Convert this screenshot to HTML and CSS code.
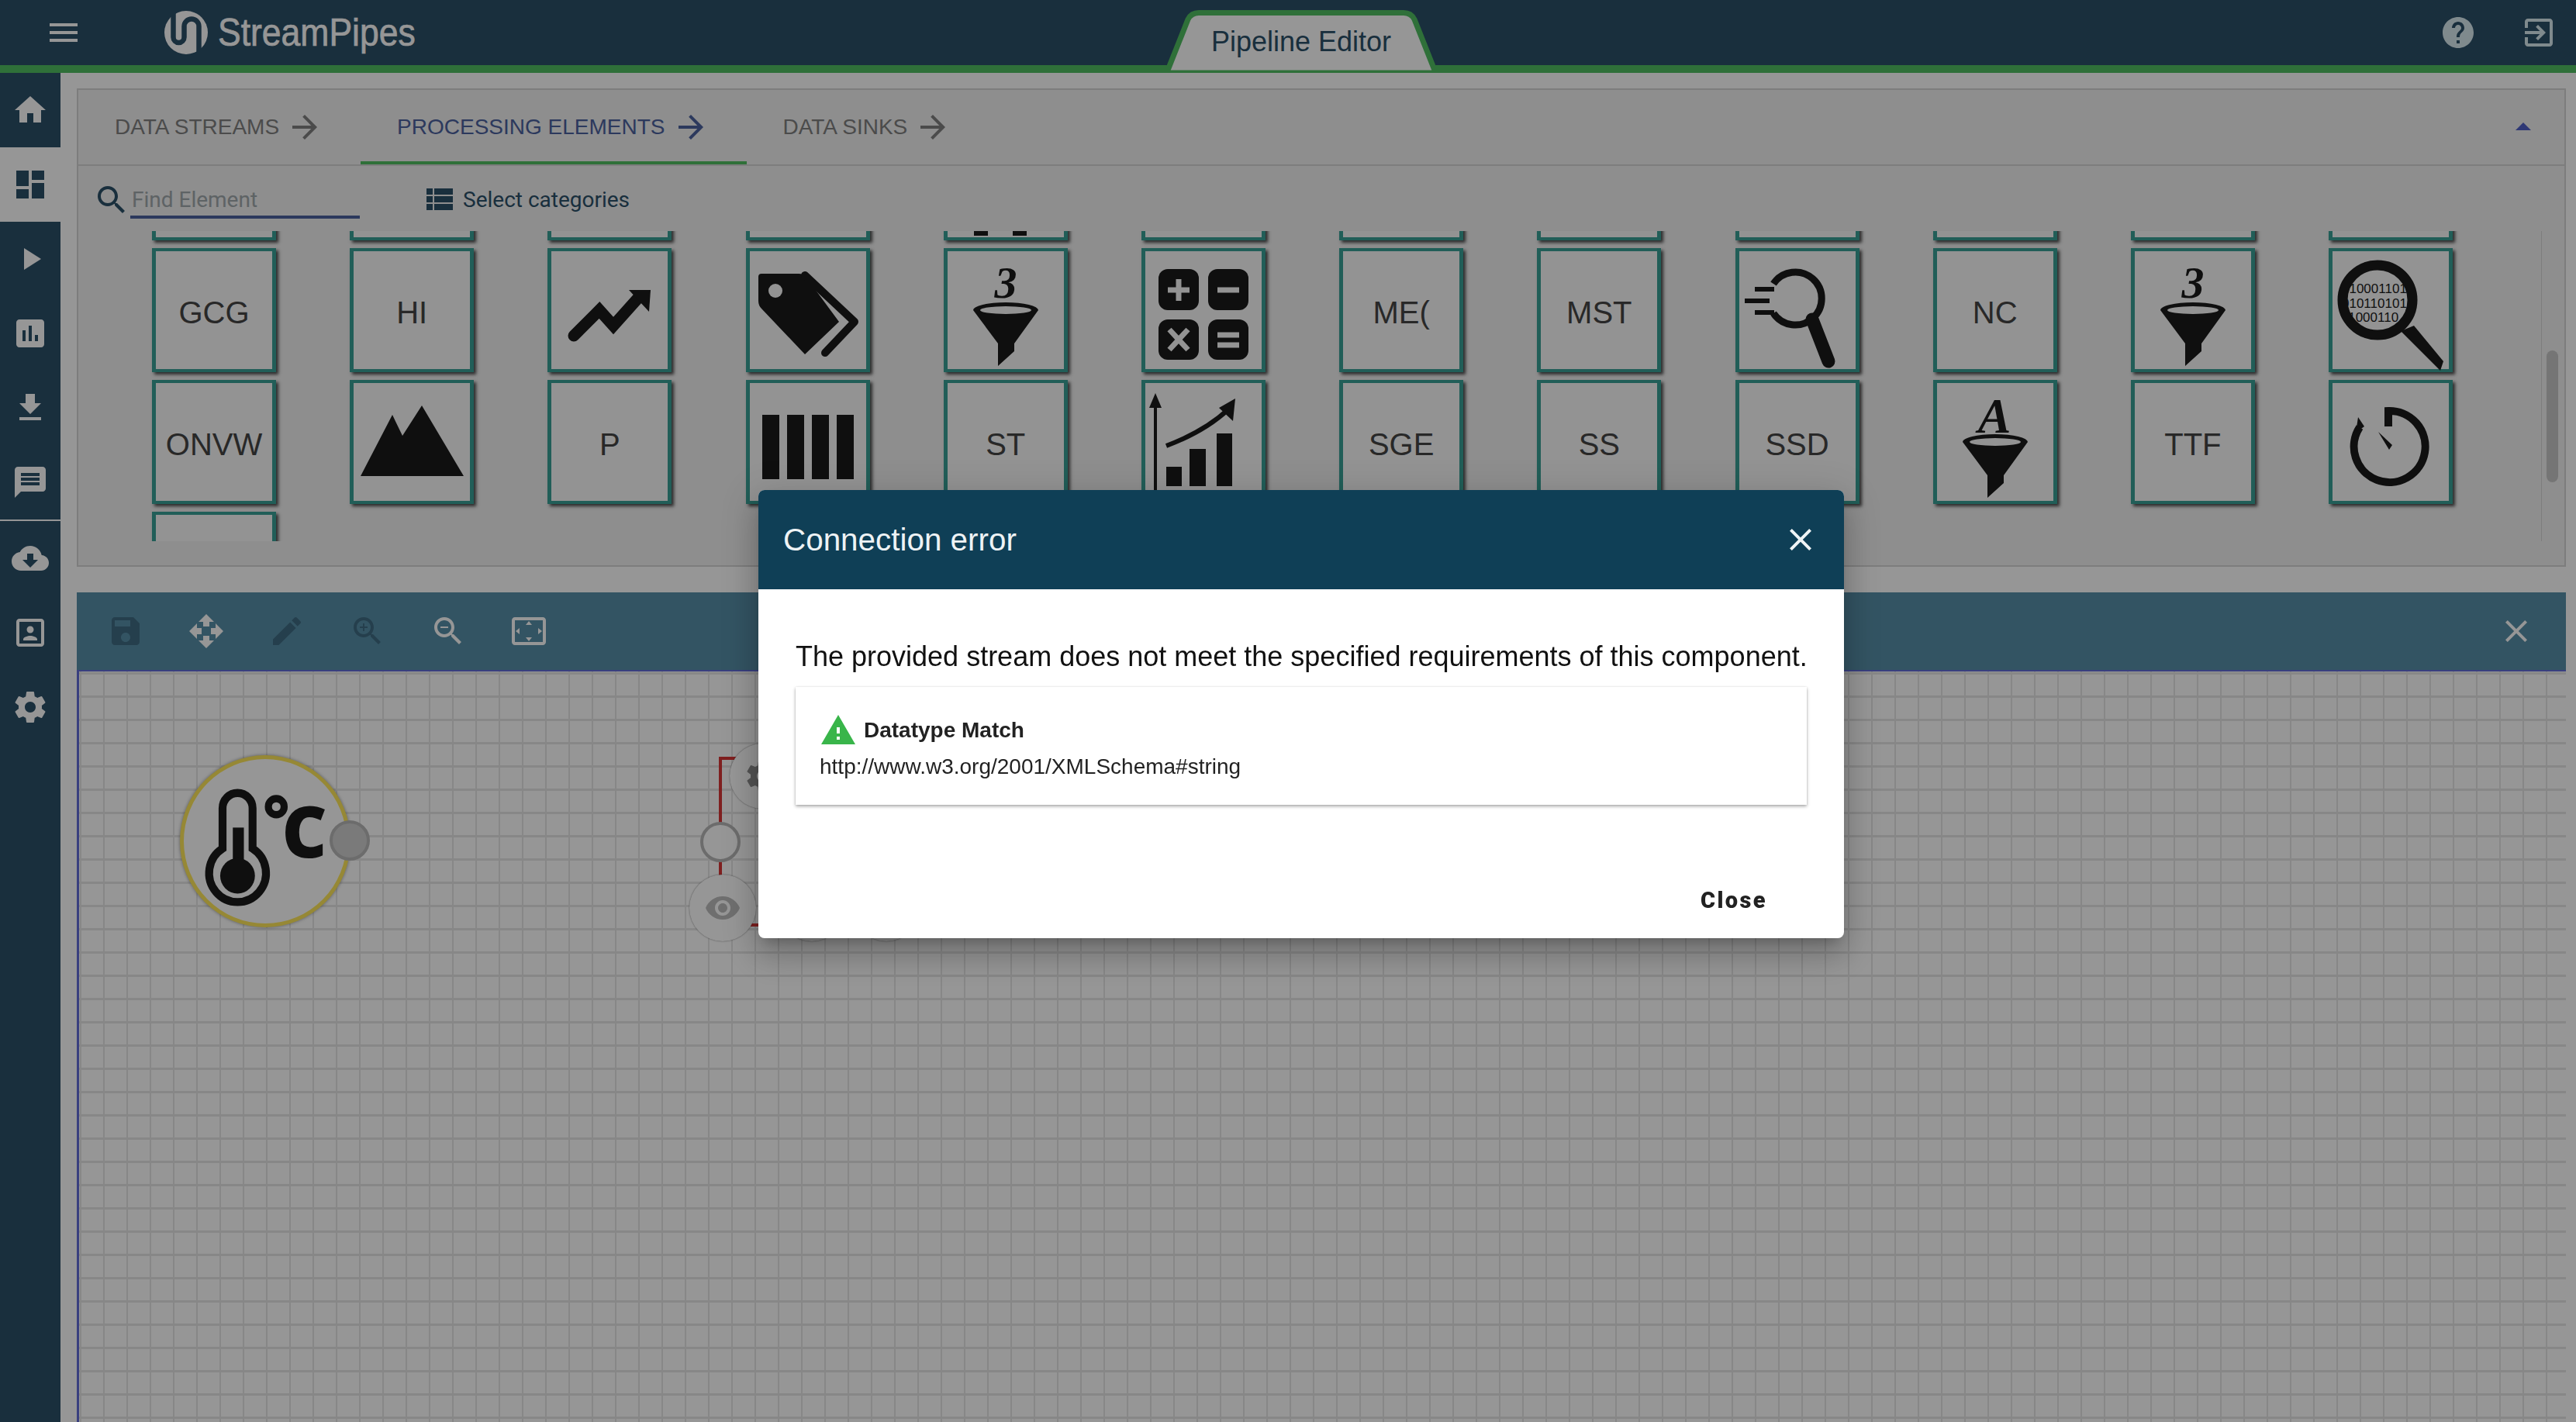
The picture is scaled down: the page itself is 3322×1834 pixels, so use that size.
FILE: index.html
```html
<!DOCTYPE html>
<html lang="en">
<head>
    <meta charset="UTF-8">
    <title>StreamPipes Pipeline Editor</title>
    <link rel="stylesheet" href="styles.css">
</head>
<body>
    <svg class="sprites" width="0" height="0">
        <symbol id="i-menu" viewBox="0 0 24 24"><path d="M3 18h18v-2H3v2zm0-5h18v-2H3v2zm0-7v2h18V6H3z"/></symbol>
        <symbol id="i-home" viewBox="0 0 24 24"><path d="M10 20v-6h4v6h5v-8h3L12 3 2 12h3v8z"/></symbol>
        <symbol id="i-dashboard" viewBox="0 0 24 24"><path d="M3 13h8V3H3v10zm0 8h8v-6H3v6zm10 0h8V11h-8v10zm0-18v6h8V3h-8z"/></symbol>
        <symbol id="i-play" viewBox="0 0 24 24"><path d="M8 5v14l11-7z"/></symbol>
        <symbol id="i-chart" viewBox="0 0 24 24"><path d="M19 3H5c-1.1 0-2 .9-2 2v14c0 1.1.9 2 2 2h14c1.1 0 2-.9 2-2V5c0-1.1-.9-2-2-2zM9 17H7v-7h2v7zm4 0h-2V7h2v10zm4 0h-2v-4h2v4z"/></symbol>
        <symbol id="i-download" viewBox="0 0 24 24"><path d="M19 9h-4V3H9v6H5l7 7 7-7zM5 18v2h14v-2H5z"/></symbol>
        <symbol id="i-message" viewBox="0 0 24 24"><path d="M20 2H4c-1.1 0-1.99.9-1.99 2L2 22l4-4h14c1.1 0 2-.9 2-2V4c0-1.1-.9-2-2-2zm-2 12H6v-2h12v2zm0-3H6V9h12v2zm0-3H6V6h12v2z"/></symbol>
        <symbol id="i-cloud" viewBox="0 0 24 24"><path d="M19.35 10.04C18.67 6.59 15.64 4 12 4 9.11 4 6.6 5.64 5.35 8.04 2.34 8.36 0 10.91 0 14c0 3.31 2.69 6 6 6h13c2.76 0 5-2.24 5-5 0-2.64-2.05-4.78-4.65-4.96zM17 13l-5 5-5-5h3V9h4v4h3z"/></symbol>
        <symbol id="i-portrait" viewBox="0 0 24 24"><path d="M12 12.25c1.24 0 2.25-1.01 2.25-2.25S13.24 7.75 12 7.75 9.75 8.76 9.75 10s1.01 2.25 2.25 2.25zm4.5 4c0-1.5-3-2.25-4.5-2.25s-4.5.75-4.5 2.25V17h9v-.75zM19 3H5c-1.1 0-2 .9-2 2v14c0 1.1.9 2 2 2h14c1.1 0 2-.9 2-2V5c0-1.1-.9-2-2-2zm0 16H5V5h14v14z"/></symbol>
        <symbol id="i-gear" viewBox="0 0 24 24"><path d="M19.43 12.98c.04-.32.07-.64.07-.98s-.03-.66-.07-.98l2.11-1.65c.19-.15.24-.42.12-.64l-2-3.46c-.12-.22-.39-.3-.61-.22l-2.49 1c-.52-.4-1.08-.73-1.69-.98l-.38-2.65C14.46 2.18 14.25 2 14 2h-4c-.25 0-.46.18-.49.42l-.38 2.65c-.61.25-1.17.59-1.69.98l-2.49-1c-.23-.09-.49 0-.61.22l-2 3.46c-.13.22-.07.49.12.64l2.11 1.65c-.04.32-.07.65-.07.98s.03.66.07.98l-2.11 1.65c-.19.15-.24.42-.12.64l2 3.46c.12.22.39.3.61.22l2.49-1c.52.4 1.08.73 1.69.98l.38 2.65c.03.24.24.42.49.42h4c.25 0 .46-.18.49-.42l.38-2.65c.61-.25 1.17-.59 1.69-.98l2.49 1c.23.09.49 0 .61-.22l2-3.46c.12-.22.07-.49-.12-.64l-2.11-1.65zM12 15.5c-1.93 0-3.5-1.57-3.5-3.5s1.57-3.5 3.5-3.5 3.5 1.57 3.5 3.5-1.57 3.5-3.5 3.5z"/></symbol>
        <symbol id="i-help" viewBox="0 0 24 24"><path d="M12 2C6.48 2 2 6.48 2 12s4.48 10 10 10 10-4.48 10-10S17.52 2 12 2zm1 17h-2v-2h2v2zm2.07-7.75l-.9.92C13.45 12.9 13 13.5 13 15h-2v-.5c0-1.1.45-2.1 1.17-2.83l1.24-1.26c.37-.36.59-.86.59-1.41 0-1.1-.9-2-2-2s-2 .9-2 2H8c0-2.21 1.79-4 4-4s4 1.79 4 4c0 .88-.36 1.68-.93 2.25z"/></symbol>
        <symbol id="i-exit" viewBox="0 0 24 24"><path d="M10.09 15.59L11.5 17l5-5-5-5-1.41 1.41L12.67 11H3v2h9.67l-2.58 2.59zM19 3H5c-1.11 0-2 .9-2 2v4h2V5h14v14H5v-4H3v4c0 1.1.89 2 2 2h14c1.1 0 2-.9 2-2V5c0-1.1-.9-2-2-2z"/></symbol>
        <symbol id="i-arrow" viewBox="0 0 24 24"><path d="M12 4l-1.41 1.41L16.17 11H4v2h12.17l-5.58 5.59L12 20l8-8z"/></symbol>
        <symbol id="i-search" viewBox="0 0 24 24"><path d="M15.5 14h-.79l-.28-.27C15.41 12.59 16 11.11 16 9.5 16 5.91 13.09 3 9.5 3S3 5.91 3 9.5 5.91 16 9.5 16c1.61 0 3.09-.59 4.23-1.57l.27.28v.79l5 4.99L20.49 19l-4.99-5zm-6 0C7.01 14 5 11.99 5 9.5S7.01 5 9.5 5 14 7.01 14 9.5 11.99 14 9.5 14z"/></symbol>
        <symbol id="i-list" viewBox="0 0 24 24"><path d="M4 14h4v-4H4v4zm0 5h4v-4H4v4zm0-10h4V5H4v4zm5 5h12v-4H9v4zm0 5h12v-4H9v4zM9 5v4h12V5H9z"/></symbol>
        <symbol id="i-save" viewBox="0 0 24 24"><path d="M17 3H5c-1.11 0-2 .9-2 2v14c0 1.1.89 2 2 2h14c1.1 0 2-.9 2-2V7l-4-4zm-5 16c-1.66 0-3-1.34-3-3s1.34-3 3-3 3 1.34 3 3-1.34 3-3 3zm3-10H5V5h10v4z"/></symbol>
        <symbol id="i-move" viewBox="0 0 24 24"><path d="M10 9h4V6h3l-5-5-5 5h3v3zm-1 1H6V7l-5 5 5 5v-3h3v-4zm14 2l-5-5v3h-3v4h3v3l5-5zm-9 3h-4v3H7l5 5 5-5h-3v-3z"/></symbol>
        <symbol id="i-edit" viewBox="0 0 24 24"><path d="M3 17.25V21h3.75L17.81 9.94l-3.75-3.75L3 17.25zM20.71 7.04c.39-.39.39-1.02 0-1.41l-2.34-2.34c-.39-.39-1.02-.39-1.41 0l-1.83 1.83 3.75 3.75 1.83-1.83z"/></symbol>
        <symbol id="i-zoom-in" viewBox="0 0 24 24"><path d="M15.5 14h-.79l-.28-.27C15.41 12.59 16 11.11 16 9.5 16 5.91 13.09 3 9.5 3S3 5.91 3 9.5 5.91 16 9.5 16c1.61 0 3.09-.59 4.23-1.57l.27.28v.79l5 4.99L20.49 19l-4.99-5zm-6 0C7.01 14 5 11.99 5 9.5S7.01 5 9.5 5 14 7.01 14 9.5 11.99 14 9.5 14zm2.5-4h-2v2H9v-2H7V9h2V7h1v2h2v1z"/></symbol>
        <symbol id="i-zoom-out" viewBox="0 0 24 24"><path d="M15.5 14h-.79l-.28-.27C15.41 12.59 16 11.11 16 9.5 16 5.91 13.09 3 9.5 3S3 5.91 3 9.5 5.91 16 9.5 16c1.61 0 3.09-.59 4.23-1.57l.27.28v.79l5 4.99L20.49 19l-4.99-5zm-6 0C7.01 14 5 11.99 5 9.5S7.01 5 9.5 5 14 7.01 14 9.5 11.99 14 9.5 14zM7 9h5v1H7z"/></symbol>
        <symbol id="i-fit" viewBox="0 0 24 24"><path d="M12.01 5.5L10 8h4l-1.99-2.5zM18 10v4l2.5-1.99L18 10zM6 10l-2.5 2.01L6 14v-4zm8 6h-4l2.01 2.5L14 16zm7-13H3c-1.1 0-2 .9-2 2v14c0 1.1.9 2 2 2h18c1.1 0 2-.9 2-2V5c0-1.1-.9-2-2-2zm0 16.01H3V4.99h18v14.02z"/></symbol>
        <symbol id="i-close" viewBox="0 0 24 24"><path d="M19 6.41L17.59 5 12 10.59 6.41 5 5 6.41 10.59 12 5 17.59 6.41 19 12 13.41 17.59 19 19 17.59 13.41 12z"/></symbol>
        <symbol id="i-warning" viewBox="0 0 24 24"><path d="M1 21h22L12 2 1 21zm12-3h-2v-2h2v2zm0-4h-2v-4h2v4z"/></symbol>
        <symbol id="i-eye" viewBox="0 0 24 24"><path d="M12 4.5C7 4.5 2.73 7.61 1 12c1.73 4.39 6 7.5 11 7.5s9.27-3.11 11-7.5c-1.73-4.39-6-7.5-11-7.5zM12 17c-2.76 0-5-2.24-5-5s2.24-5 5-5 5 2.24 5 5-2.24 5-5 5zm0-8c-1.66 0-3 1.34-3 3s1.34 3 3 3 3-1.34 3-3-1.34-3-3-3z"/></symbol>
        <symbol id="i-funnel" viewBox="0 0 160 160"><path d="M38 80A42 10 0 0 1 122 80L91 123V133L70 152V123Z"/><ellipse class="funnel-rim" cx="80" cy="80" rx="33" ry="5"/></symbol>
    </svg>

    <div class="app">
        <header class="topbar">
            <svg class="icon menu-btn"><use href="#i-menu"/></svg>
            <svg class="logo-mark" viewBox="12 8 56 56">
                <circle cx="40" cy="36" r="28" fill="#fff"/>
                <path d="M23.500 4V42A7 7 0 0 0 37.500 42V28A9.500 9.500 0 0 1 56.500 28V70" fill="none" stroke="#2c5069" stroke-width="6.500"/>
            </svg>
            <span class="logo-text">StreamPipes</span>
            <div class="page-tab">
                <svg class="page-tab-shape" viewBox="0 0 348 81"><path d="M3 75H0V81H348V75H345L320 12C317 6 313 3.500 306 3.500H42C35 3.500 31 6 28 12Z" fill="#fff" stroke="#51be62" stroke-width="7"/></svg>
                <span class="page-tab-label">Pipeline Editor</span>
            </div>
            <div class="topbar-right">
                <svg class="icon help-btn"><use href="#i-help"/></svg>
                <svg class="icon help-btn"><use href="#i-exit"/></svg>
            </div>
        </header>

        <div class="main">
            <nav class="sidebar">
                <a class="nav-item"><svg class="icon"><use href="#i-home"/></svg></a>
                <a class="nav-item active"><svg class="icon"><use href="#i-dashboard"/></svg></a>
                <a class="nav-item"><svg class="icon"><use href="#i-play"/></svg></a>
                <a class="nav-item"><svg class="icon"><use href="#i-chart"/></svg></a>
                <a class="nav-item"><svg class="icon"><use href="#i-download"/></svg></a>
                <a class="nav-item"><svg class="icon"><use href="#i-message"/></svg></a>
                <div class="nav-divider"></div>
                <a class="nav-item"><svg class="icon"><use href="#i-cloud"/></svg></a>
                <a class="nav-item"><svg class="icon"><use href="#i-portrait"/></svg></a>
                <a class="nav-item"><svg class="icon"><use href="#i-gear"/></svg></a>
            </nav>

            <main class="content">
                <section class="palette">
                    <div class="palette-tabs">
                        <div class="palette-tab">DATA STREAMS <svg class="icon"><use href="#i-arrow"/></svg></div>
                        <div class="palette-tab active">PROCESSING ELEMENTS <svg class="icon"><use href="#i-arrow"/></svg></div>
                        <div class="palette-tab">DATA SINKS <svg class="icon"><use href="#i-arrow"/></svg></div>
                        <div class="collapse-caret"></div>
                    </div>
                    <div class="palette-search">
                        <svg class="icon"><use href="#i-search"/></svg>
                        <div class="find-field">Find Element</div>
                        <div class="category-btn"><svg class="icon"><use href="#i-list"/></svg>Select categories</div>
                    </div>
                    <div class="palette-body">
                        <div class="cards-viewport">
                            <div class="cards">
                                <div class="card"></div><div class="card"></div><div class="card"></div><div class="card"></div>
                                <div class="card"><svg class="card-art" viewBox="0 0 160 160"><rect x="39" y="148" width="18" height="6"/><rect x="89" y="148" width="18" height="6"/></svg></div>
                                <div class="card"></div><div class="card"></div><div class="card"></div><div class="card"></div><div class="card"></div><div class="card"></div><div class="card"></div>

                                <div class="card">GCG</div>
                                <div class="card">HI</div>
                                <div class="card"><svg class="card-art" viewBox="0 0 160 160"><path d="M34 113L67 80 85 100 119 62" fill="none" stroke-width="15" stroke-linecap="round" stroke="#1a1a1a"/><path d="M105 54H133L131 82Z"/></svg></div>
                                <div class="card"><svg class="card-art" viewBox="0 0 160 160"><path d="M20 33H68Q74 33 78 38L120 95 76 137 20 78Q16 74 16 68V37Q16 33 20 33Z"/><circle class="art-hole" cx="38" cy="55" r="9"/><path d="M76 35L140 95 102 135" fill="none" stroke="#1a1a1a" stroke-width="10" stroke-linecap="round" stroke-linejoin="round"/></svg></div>
                                <div class="card"><svg class="card-art" viewBox="0 0 160 160"><use href="#i-funnel"/><text class="art-digit" x="80" y="64">3</text></svg></div>
                                <div class="card"><svg class="card-art" viewBox="0 0 160 160"><rect x="22" y="27" width="52" height="53" rx="12"/><rect x="86" y="27" width="52" height="53" rx="12"/><rect x="22" y="92" width="52" height="52" rx="12"/><rect x="86" y="92" width="52" height="52" rx="12"/><path class="art-sign" d="M34 54H62M48 40V68M98 54H126M36 105L60 131M60 105L36 131M98 112H126M98 125H126"/></svg></div>
                                <div class="card">ME(</div>
                                <div class="card">MST</div>
                                <div class="card"><svg class="card-art" viewBox="0 0 160 160"><path d="M49 46A34 34 0 1 1 49 84" fill="none" stroke="#1a1a1a" stroke-width="9"/><path d="M25 53H50M12 68H44M25 83H50" stroke="#1a1a1a" stroke-width="6"/><path d="M99 92L120 146" stroke="#1a1a1a" stroke-width="17" stroke-linecap="round"/></svg></div>
                                <div class="card">NC</div>
                                <div class="card"><svg class="card-art" viewBox="0 0 160 160"><use href="#i-funnel"/><text class="art-digit" x="80" y="64">3</text></svg></div>
                                <div class="card"><svg class="card-art" viewBox="0 0 160 160"><defs><clipPath id="lens"><circle cx="63" cy="67" r="44"/></clipPath></defs><g clip-path="url(#lens)"><text class="art-bits" x="17" y="58">010001101</text><text class="art-bits" x="17" y="77">010110101</text><text class="art-bits" x="17" y="95">11000110</text></g><circle cx="63" cy="67" r="45" fill="none" stroke="#1a1a1a" stroke-width="13"/><path d="M93 107L110 100 148 146 144 158Z"/></svg></div>

                                <div class="card">ONVW</div>
                                <div class="card"><svg class="card-art" viewBox="0 0 160 160"><path d="M14 124L55 45 68 72 93 33 147 124Z"/></svg></div>
                                <div class="card">P</div>
                                <div class="card"><svg class="card-art" viewBox="0 0 160 160"><rect x="21" y="45" width="22" height="83"/><rect x="53" y="45" width="22" height="83"/><rect x="85" y="45" width="22" height="83"/><rect x="117" y="45" width="22" height="83"/></svg></div>
                                <div class="card">ST</div>
                                <div class="card"><svg class="card-art" viewBox="0 0 160 160"><path d="M18 30V156" stroke="#1a1a1a" stroke-width="4" fill="none"/><path d="M18 17L26 36H10Z"/><rect x="32" y="112" width="20" height="25"/><rect x="62" y="89" width="21" height="48"/><rect x="97" y="69" width="20" height="68"/><path d="M32 85Q82 66 112 38" fill="none" stroke="#1a1a1a" stroke-width="6"/><path d="M121 24L118 53 100 36Z"/></svg></div>
                                <div class="card">SGE</div>
                                <div class="card">SS</div>
                                <div class="card">SSD</div>
                                <div class="card"><svg class="card-art" viewBox="0 0 160 160"><use href="#i-funnel"/><text class="art-letter" x="79" y="68">A</text></svg></div>
                                <div class="card">TTF</div>
                                <div class="card"><svg class="card-art" viewBox="0 0 160 160"><path d="M77 60V40A46 46 0 1 1 40 61" fill="none" stroke="#1a1a1a" stroke-width="10"/><path d="M38 48L46 60 35 68Z"/><path d="M64 67L82 84 78 90Z"/></svg></div>

                                <div class="card"></div>
                            </div>
                        </div>
                        <div class="scroll-track"><div class="scroll-thumb"></div></div>
                    </div>
                </section>

                <section class="editor">
                    <div class="editor-toolbar">
                        <svg class="icon tool-dark"><use href="#i-save"/></svg>
                        <svg class="icon tool-light"><use href="#i-move"/></svg>
                        <svg class="icon tool-dark"><use href="#i-edit"/></svg>
                        <svg class="icon tool-dark"><use href="#i-zoom-in"/></svg>
                        <svg class="icon tool-light"><use href="#i-zoom-out"/></svg>
                        <svg class="icon tool-light"><use href="#i-fit"/></svg>
                        <svg class="icon tool-light tool-close"><use href="#i-close"/></svg>
                    </div>
                    <div class="canvas">
                        <div class="node node-source">
                            <svg class="node-art" viewBox="0 0 216 214" preserveAspectRatio="none">
                                <path d="M54 116V66A19 19 0 0 1 92 66V116A36 36 0 1 1 54 116Z" fill="none" stroke="#1a1a1a" stroke-width="10"/>
                                <rect x="67" y="90" width="14" height="44"/>
                                <circle cx="73" cy="150" r="22"/>
                                <circle cx="122" cy="64" r="10" fill="none" stroke="#1a1a1a" stroke-width="9"/>
                                <text class="node-unit" x="129" y="127">C</text>
                            </svg>
                        </div>
                        <div class="port port-out"></div>
                        <div class="node-frame"></div>
                        <div class="port port-in"></div>
                        <div class="node-btn btn-gear"><svg class="icon"><use href="#i-gear"/></svg></div>
                        <div class="node-btn btn-eye"><svg class="icon"><use href="#i-eye"/></svg></div>
                        <div class="node-btn btn-a"></div>
                        <div class="node-btn btn-b"></div>
                    </div>
                </section>
            </main>
        </div>
    </div>

    <div class="backdrop"></div>
    <div class="modal">
        <div class="modal-header">
            <span>Connection error</span>
            <svg class="icon"><use href="#i-close"/></svg>
        </div>
        <div class="modal-body">
            <p class="modal-text">The provided stream does not meet the specified requirements of this component.</p>
            <div class="match-card">
                <div class="match-title"><svg class="icon"><use href="#i-warning"/></svg>Datatype Match</div>
                <div class="match-url">http://www.w3.org/2001/XMLSchema#string</div>
            </div>
        </div>
        <div class="modal-footer">Close</div>
    </div>
</body>
</html>
```

FILE: styles.css
```css
* {
    margin: 0;
    padding: 0;
    box-sizing: border-box;
}

html, body {
    height: 100%;
    overflow: hidden;
}

body {
    font-family: 'Liberation Sans', Arial, sans-serif;
    background: #fff;
}

.sprites {
    position: absolute;
}

.icon {
    width: 48px;
    height: 48px;
    fill: currentColor;
    flex: none;
    display: block;
}

.app {
    height: 100%;
    display: flex;
    flex-direction: column;
}

/* top bar */
.topbar {
    height: 94px;
    flex: none;
    display: flex;
    align-items: center;
    background: #2c5069;
    border-bottom: 10px solid #51be62;
    color: #fff;
    position: relative;
}

.menu-btn {
    margin-left: 58px;
}

.logo-mark {
    width: 56px;
    height: 56px;
    margin-left: 106px;
}

.logo-text {
    font-size: 50px;
    margin-left: 13px;
    color: #fff;
    display: inline-block;
    transform: scaleX(0.89);
    transform-origin: left center;
    -webkit-text-stroke: 0.7px #fff;
}

.page-tab {
    position: absolute;
    left: 1504px;
    top: 13px;
    width: 348px;
    height: 81px;
    text-align: center;
}

.page-tab-shape {
    position: absolute;
    left: 0;
    top: 0;
    width: 348px;
    height: 81px;
}

.page-tab-label {
    position: relative;
    font-size: 36px;
    line-height: 81px;
    color: #2c5069;
}

.topbar-right {
    margin-left: auto;
    display: flex;
    gap: 56px;
    padding-right: 24px;
}

.help-btn {
    color: #d9eaf0;
}

/* side nav */
.main {
    flex: 1;
    display: flex;
    min-height: 0;
}

.sidebar {
    width: 78px;
    flex: none;
    background: #2c5069;
    color: #fff;
}

.nav-item {
    height: 96px;
    display: flex;
    align-items: center;
    justify-content: center;
}

.nav-item.active {
    background: #fff;
    color: #2c5069;
}

.nav-divider {
    height: 2px;
    background: #fff;
}

/* palette */
.content {
    flex: 1;
    min-width: 0;
    display: flex;
    flex-direction: column;
    padding: 20px 13px 0 21px;
}

.palette {
    height: 617px;
    flex: none;
    background: #f1f1f1;
    border: 2px solid #d4d4d4;
    display: flex;
    flex-direction: column;
}

.palette-tabs {
    height: 98px;
    flex: none;
    display: flex;
    align-items: flex-start;
    border-bottom: 2px solid #d4d4d4;
    position: relative;
}

.palette-tab {
    height: 96px;
    display: flex;
    align-items: center;
    gap: 9px;
    padding: 0 48px 0 47px;
    font-size: 28px;
    color: #808080;
    white-space: nowrap;
}

.palette-tab.active {
    color: #4c629f;
    box-shadow: inset 0 -4px 0 #51be62;
}

.palette-tab.active .icon {
    color: #4c629f;
}

.collapse-caret {
    position: absolute;
    right: 43px;
    top: 42px;
    width: 0;
    height: 0;
    border-left: 10px solid transparent;
    border-right: 10px solid transparent;
    border-bottom: 10px solid #4f5fc8;
}

.palette-search {
    height: 84px;
    flex: none;
    display: flex;
    align-items: flex-start;
    padding: 20px 0 0 19px;
    color: #2c5069;
}

.find-field {
    width: 296px;
    height: 48px;
    border-bottom: 4px solid #4c629f;
    padding: 2px 0 0 2px;
    font-family: Roboto, sans-serif;
    font-size: 28px;
    line-height: 44px;
    color: #a0a8ac;
}

.category-btn {
    display: flex;
    align-items: center;
    gap: 7px;
    margin-left: 78px;
    height: 46px;
    font-family: Roboto, sans-serif;
    font-size: 28px;
}

.palette-body {
    height: 400px;
    flex: none;
    display: flex;
}

.cards-viewport {
    flex: 1;
    overflow: hidden;
    padding-left: 95px;
}

.cards {
    display: grid;
    grid-template-columns: repeat(12, 160px);
    grid-auto-rows: 160px;
    gap: 10px 95.2px;
    margin-top: -148px;
}

.card {
    background: #fafafa;
    border: solid #38a096;
    border-width: 4px 5px;
    box-shadow: 3px 3px 4px rgba(0, 0, 0, 0.7);
    display: flex;
    align-items: center;
    justify-content: center;
    position: relative;
    padding-top: 7px;
    font-size: 40px;
    color: #444;
}

.card-art {
    position: absolute;
    left: -5px;
    top: -4px;
    width: 160px;
    height: 160px;
    fill: #1a1a1a;
}

.art-hole {
    fill: #fafafa;
}

.funnel-rim {
    fill: #fafafa;
}

.art-sign {
    fill: none;
    stroke: #fafafa;
    stroke-width: 7;
}

.art-digit,
.art-letter {
    font-family: 'Liberation Serif', serif;
    font-weight: bold;
    font-style: italic;
    text-anchor: middle;
}

.art-digit {
    font-size: 58px;
}

.art-letter {
    font-size: 64px;
}

.art-bits {
    font-family: 'Liberation Sans', sans-serif;
    font-size: 17px;
}

.scroll-track {
    width: 30px;
    flex: none;
    border-left: 1px solid #d4d4d4;
    padding: 154px 8px 0 6px;
}

.scroll-thumb {
    height: 170px;
    border-radius: 8px;
    background: #c8c8c8;
}

/* editor */
.editor {
    flex: 1;
    min-height: 0;
    margin-top: 33px;
    display: flex;
    flex-direction: column;
}

.editor-toolbar {
    height: 100px;
    flex: none;
    display: flex;
    align-items: center;
    gap: 56px;
    padding: 0 40px 0 39px;
    background: #5890a8;
}

.tool-dark {
    color: #406c84;
}

.tool-light {
    color: #fff;
}

.tool-close {
    margin-left: auto;
}

.canvas {
    flex: 1;
    position: relative;
    border-top: 2px solid #626bd9;
    border-left: 3px solid #626bd9;
    background-color: #fff;
    background-image:
        linear-gradient(to right, #e6e6e6 2px, transparent 2px),
        linear-gradient(to bottom, #e6e6e6 3px, transparent 3px);
    background-size: 30px 30px;
    background-position: 1px 1px;
}

.node {
    position: absolute;
    left: 130px;
    top: 108px;
    width: 220px;
    height: 222px;
    border-radius: 50%;
    background: #fff;
    border: 5px solid #ffe85a;
    box-shadow: 0 0 4px rgba(0, 0, 0, 0.4);
}

.node-art {
    position: absolute;
    left: -5px;
    top: -5px;
    width: 220px;
    height: 222px;
    fill: #1a1a1a;
}

.node-unit {
    font-family: 'Open Sans', sans-serif;
    font-weight: 800;
    font-size: 88px;
}

.port {
    position: absolute;
    width: 52px;
    height: 52px;
    border-radius: 50%;
    border: 4px solid #b8b8b8;
}

.port-out {
    left: 323px;
    top: 192px;
    background: #cfcfcf;
}

.port-in {
    left: 801px;
    top: 194px;
    background: #fff;
}

.node-frame {
    position: absolute;
    left: 825px;
    top: 110px;
    width: 220px;
    height: 219px;
    border: 4px solid #d93636;
}

.node-btn {
    position: absolute;
    width: 84px;
    height: 84px;
    border-radius: 50%;
    background: #fff;
    box-shadow: 0 0 2px rgba(0, 0, 0, 0.5);
    display: flex;
    align-items: center;
    justify-content: center;
}

.btn-gear {
    left: 839px;
    top: 93px;
    color: #909090;
}

.btn-eye {
    left: 787px;
    top: 262px;
    width: 86px;
    height: 86px;
    color: #bdbdbd;
}

.btn-a {
    left: 903px;
    top: 264px;
}

.btn-b {
    left: 999px;
    top: 264px;
}

/* dialog */
.backdrop {
    position: fixed;
    inset: 0;
    background: rgba(0, 0, 0, 0.41);
}

.modal {
    position: absolute;
    left: 978px;
    top: 632px;
    width: 1400px;
    height: 578px;
    display: flex;
    flex-direction: column;
    background: #fff;
    border-radius: 8px;
    overflow: hidden;
    box-shadow: 0 11px 15px -7px rgba(0, 0, 0, 0.2), 0 24px 38px 3px rgba(0, 0, 0, 0.14), 0 9px 46px 8px rgba(0, 0, 0, 0.12);
}

.modal-header {
    height: 128px;
    flex: none;
    display: flex;
    align-items: center;
    justify-content: space-between;
    padding: 0 32px;
    background: #0f3f56;
    color: #eef3f5;
    font-size: 40.4px;
}

.modal-body {
    flex: 1;
    padding: 66px 48px 0;
}

.modal-text {
    font-size: 36px;
    line-height: 42px;
    color: #111;
    white-space: nowrap;
}

.match-card {
    margin-top: 18px;
    height: 152px;
    padding: 32px 0 0 31px;
    box-shadow: 0 2px 4px rgba(0, 0, 0, 0.35), 0 0 2px rgba(0, 0, 0, 0.1);
    color: #222;
}

.match-title {
    display: flex;
    align-items: center;
    gap: 9px;
    font-size: 28px;
    font-weight: bold;
}

.match-title .icon {
    color: #39b54a;
}

.match-url {
    font-size: 28px;
    line-height: 34px;
    margin-top: 6px;
}

.modal-footer {
    flex: none;
    text-align: right;
    padding: 0 99px 32px 0;
    font-family: Roboto, sans-serif;
    font-size: 29px;
    line-height: 34px;
    font-weight: 900;
    letter-spacing: 2.400px;
    color: #222;
}
```
